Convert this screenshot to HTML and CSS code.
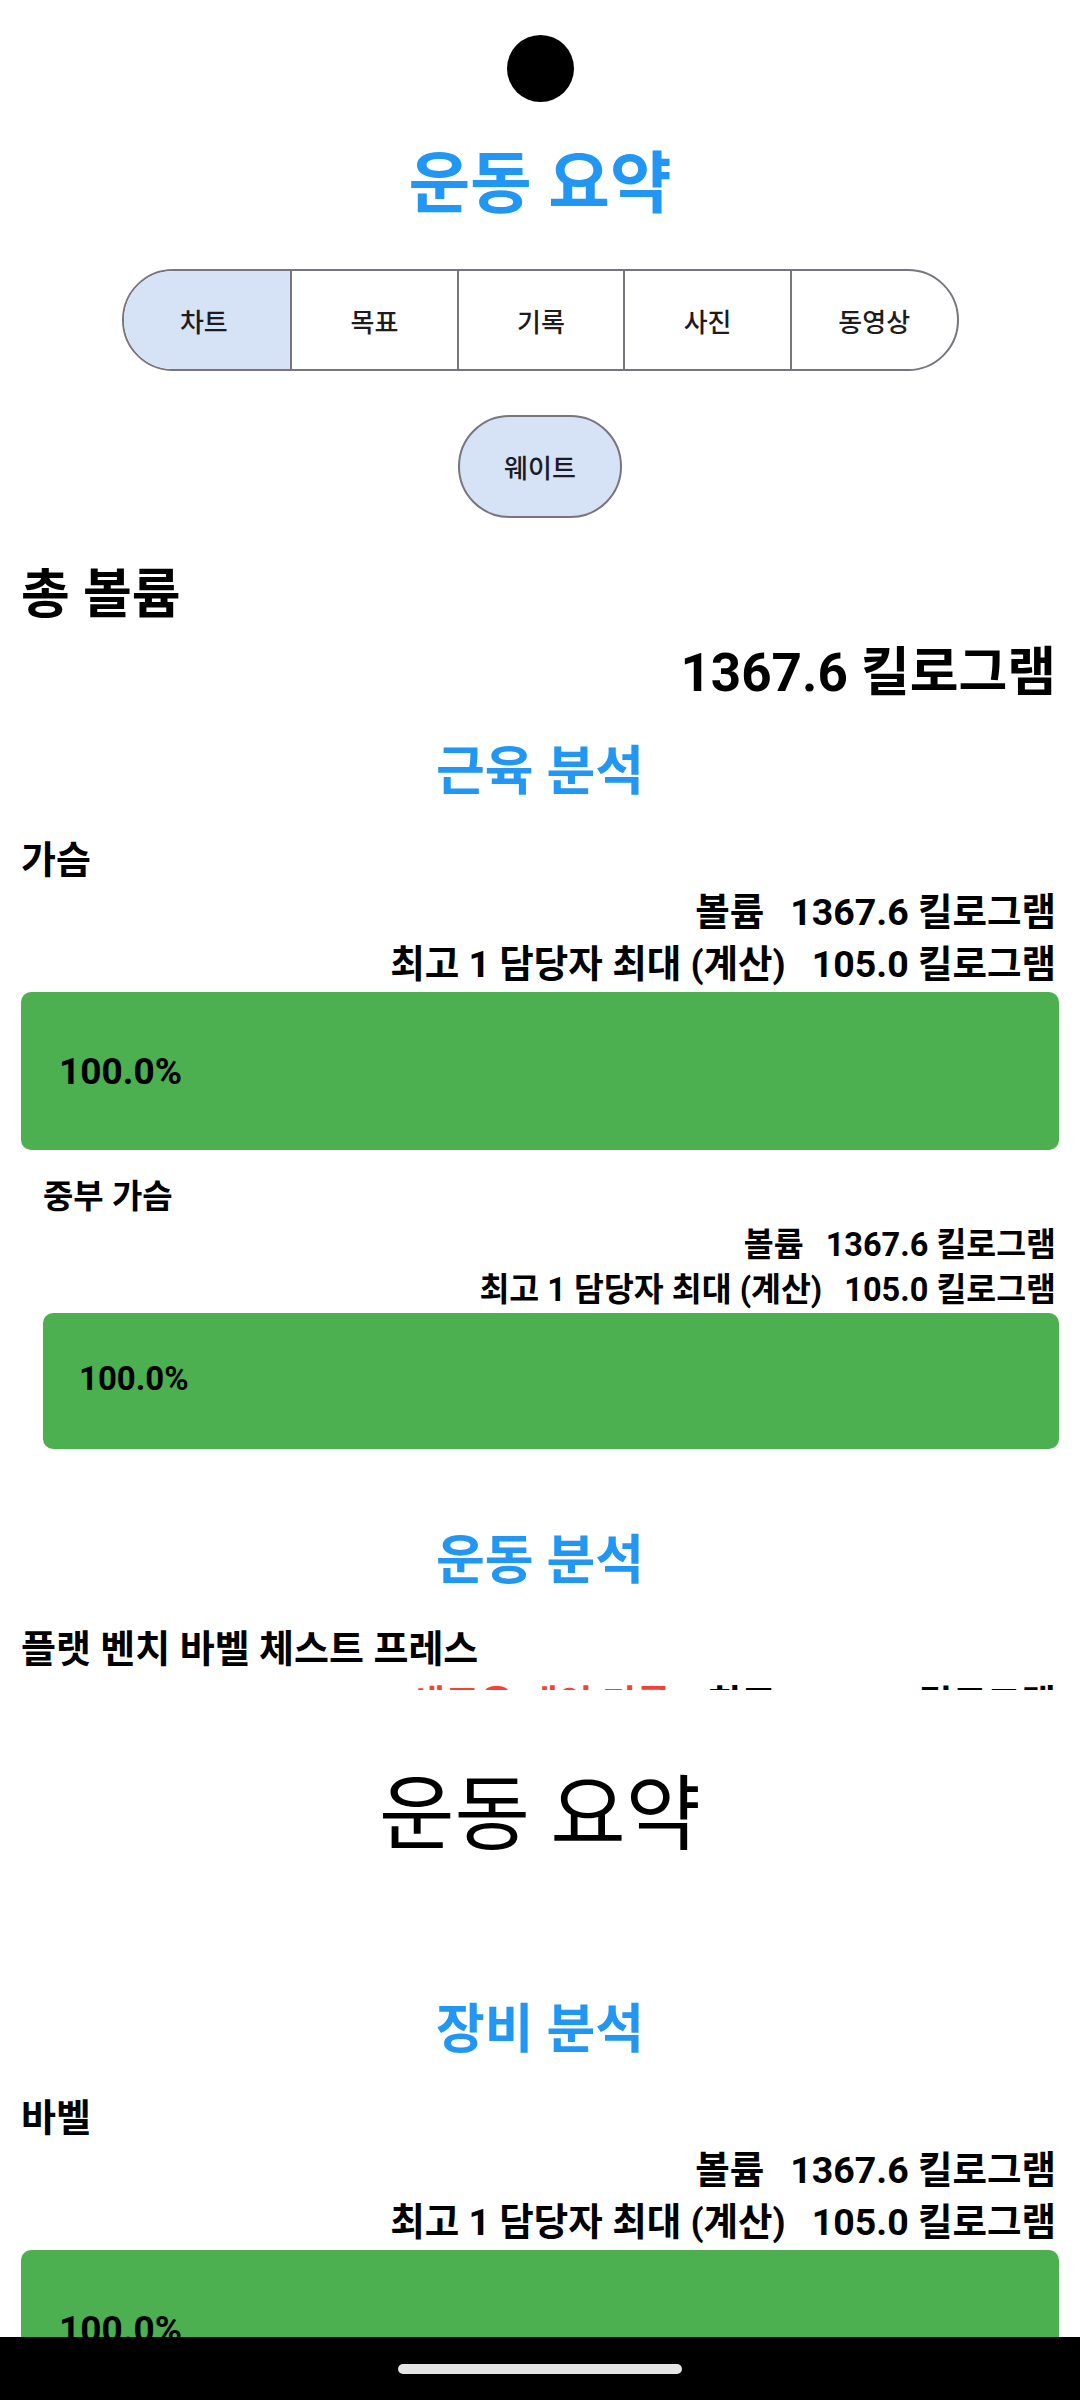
FILE: index.html
```html
<!DOCTYPE html>
<html lang="ko">
<head>
<meta charset="utf-8">
<title>운동 요약</title>
<link rel="stylesheet" href="styles.css">
</head>
<body>
<div class="screen">
  <div class="scroll">
    <div class="status"><div class="camera"></div></div>
    <h1 class="page-title">운동 요약</h1>
    <div class="segments">
      <div class="segment selected">차트</div>
      <div class="segment">목표</div>
      <div class="segment">기록</div>
      <div class="segment">사진</div>
      <div class="segment">동영상</div>
    </div>
    <div class="chip-row"><div class="chip">웨이트</div></div>
    <div class="content">
      <div class="total-label">총 볼륨</div>
      <div class="total-value">1367.6 킬로그램</div>

      <h2 class="section-title first">근육 분석</h2>
      <div class="group-title">가슴</div>
      <div class="stats">
        <div class="stat"><span>볼륨</span><span>1367.6 킬로그램</span></div>
        <div class="stat"><span>최고 1 담당자 최대 (계산)</span><span>105.0 킬로그램</span></div>
      </div>
      <div class="bar">100.0%</div>

      <div class="sub">
        <div class="group-title">중부 가슴</div>
        <div class="stats">
          <div class="stat"><span>볼륨</span><span>1367.6 킬로그램</span></div>
          <div class="stat"><span>최고 1 담당자 최대 (계산)</span><span>105.0 킬로그램</span></div>
        </div>
        <div class="bar">100.0%</div>
      </div>

      <h2 class="section-title">운동 분석</h2>
      <div class="group-title">플랫 벤치 바벨 체스트 프레스</div>
      <div class="stats clipped">
        <div class="stat wide"><span class="pr">새로운 개인 기록</span><span>최고</span><span>105.0 킬로그램</span></div>
      </div>
    </div>
  </div>

  <div class="lower">
    <div class="appbar-title">운동 요약</div>
    <div class="content">
      <h2 class="section-title">장비 분석</h2>
      <div class="group-title">바벨</div>
      <div class="stats">
        <div class="stat"><span>볼륨</span><span>1367.6 킬로그램</span></div>
        <div class="stat"><span>최고 1 담당자 최대 (계산)</span><span>105.0 킬로그램</span></div>
      </div>
      <div class="bar">100.0%</div>
    </div>
  </div>

  <div class="navbar"><div class="pill"></div></div>
</div>
</body>
</html>
```

FILE: styles.css
```css
* { box-sizing: border-box; }

body {
  margin: 0;
  background: #ffffff;
  font-family: Roboto, "Noto Sans CJK KR", sans-serif;
  color: #000000;
}

.screen {
  width: 1080px;
  height: 2400px;
  overflow: hidden;
  display: flex;
  flex-direction: column;
}

.scroll {
  flex: none;
  height: 1690px;
  overflow: hidden;
}

.status {
  height: 136px;
  display: flex;
  align-items: center;
  justify-content: center;
}

.camera {
  width: 67px;
  height: 67px;
  border-radius: 50%;
  background: #000000;
}

.page-title {
  margin: 3px 0 0;
  height: 90px;
  line-height: 90px;
  font-size: 67px;
  font-weight: 700;
  color: #2196F3;
  text-align: center;
}

.segments {
  margin: 40px auto 0;
  width: 837px;
  height: 102px;
  border: 2px solid #79747E;
  border-radius: 51px;
  overflow: hidden;
  display: grid;
  grid-template-columns: repeat(5, 1fr);
}

.segment {
  display: flex;
  align-items: center;
  justify-content: center;
  font-size: 26px;
  font-weight: 500;
  color: #1d1b20;
}

.segment + .segment { border-left: 2px solid #79747E; }

.segment.selected {
  background: #d6e3f6;
  padding-right: 6px;
}

.chip-row {
  margin-top: 44px;
  display: flex;
  justify-content: center;
}

.chip {
  width: 164px;
  height: 103px;
  border: 2px solid #79747E;
  border-radius: 52px;
  background: #d6e3f6;
  display: flex;
  align-items: center;
  justify-content: center;
  font-size: 26px;
  font-weight: 500;
  color: #1d1b20;
}

.content { padding: 0 21px; }

.total-label {
  margin-top: 47px;
  line-height: 60px;
  font-size: 53px;
  font-weight: 700;
}

.total-value {
  margin-top: 18px;
  line-height: 60px;
  font-size: 53px;
  font-weight: 700;
  text-align: right;
  padding-right: 3px;
}

.section-title {
  margin: 80px 0 0;
  line-height: 64px;
  font-size: 53px;
  font-weight: 700;
  color: #2196F3;
  text-align: center;
}

.section-title.first { margin-top: 37px; }

.group-title {
  margin-top: 30px;
  line-height: 52px;
  font-size: 38px;
  font-weight: 700;
}

.stat {
  display: flex;
  justify-content: flex-end;
  gap: 26px;
  line-height: 52px;
  font-size: 37.5px;
  font-weight: 700;
  padding-right: 3px;
  white-space: nowrap;
}

.stat.wide { gap: 36px; }

.stats.clipped { margin-top: 3px; }

.stat .pr { color: #F44336; }

.bar {
  margin-top: 2px;
  height: 158px;
  border-radius: 10px;
  background: #4CAF50;
  display: flex;
  align-items: center;
  padding-left: 38px;
  font-size: 37px;
  font-weight: 700;
}

.sub { padding-left: 22px; }

.sub .group-title {
  margin-top: 24px;
  line-height: 45px;
  font-size: 33px;
}

.sub .stats { margin-top: 4px; }

.sub .stat {
  line-height: 45px;
  font-size: 32.5px;
  gap: 22px;
}

.sub .bar {
  margin-top: 0;
  height: 136px;
  font-size: 33px;
  padding-left: 36px;
  padding-bottom: 5px;
}

.lower {
  flex: none;
  height: 647px;
  overflow: hidden;
}

.appbar-title {
  margin: 80px 0 138px;
  line-height: 90px;
  font-size: 82px;
  font-weight: 400;
  text-align: center;
}

.navbar {
  flex: none;
  height: 63px;
  background: #000000;
  display: flex;
  justify-content: center;
  padding-top: 27px;
}

.pill {
  width: 284px;
  height: 10px;
  border-radius: 5px;
  background: #e4e4e4;
}
```
